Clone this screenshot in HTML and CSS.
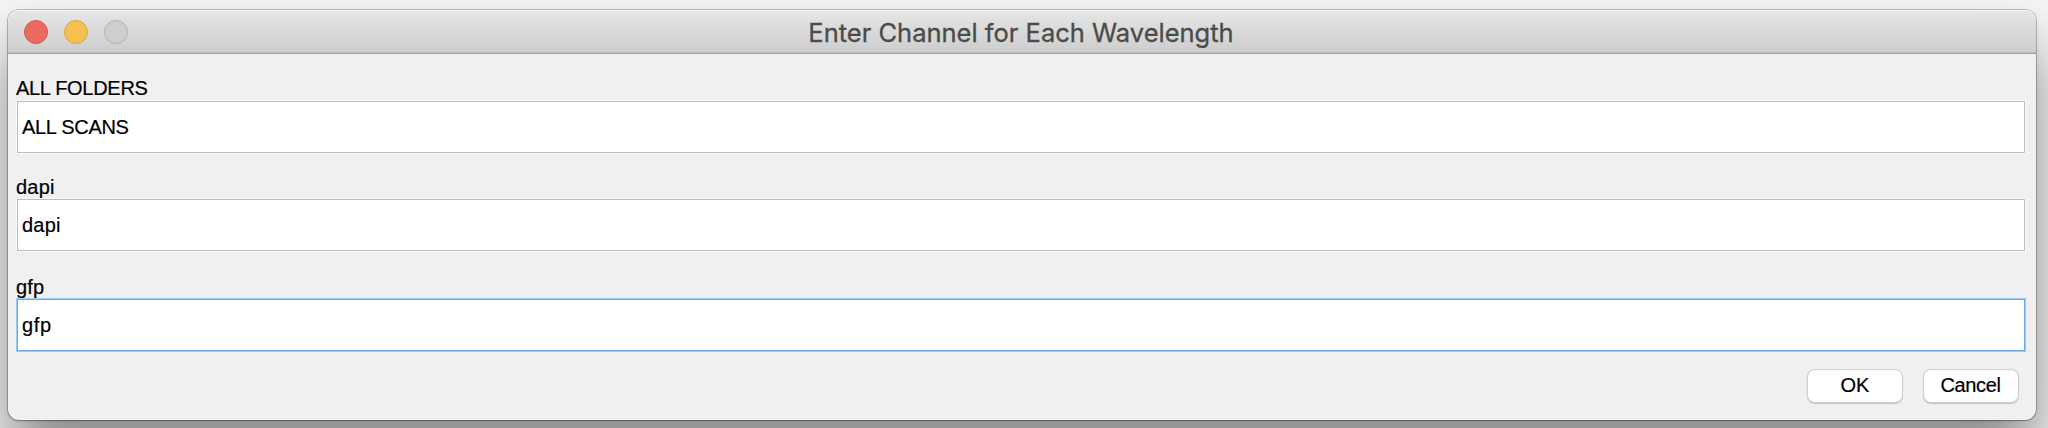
FILE: index.html
```html
<!DOCTYPE html>
<html lang="en">
<head>
<meta charset="utf-8">
<title>Enter Channel for Each Wavelength</title>
<link rel="stylesheet" href="styles.css">
</head>
<body>
<main class="window">
  <header class="titlebar">
    <div class="lights">
      <span class="light close"></span>
      <span class="light minimize"></span>
      <span class="light disabled"></span>
    </div>
    <h1 class="title"><span>Enter Channel for Each Wavelength</span></h1>
  </header>
  <form class="form">
    <div class="row">
      <label class="label caps" for="all">ALL FOLDERS</label>
      <input class="field caps-field" id="all" type="text" value="ALL SCANS">
    </div>
    <div class="row">
      <label class="label lower" for="dapi">dapi</label>
      <input class="field" id="dapi" type="text" value="dapi">
    </div>
    <div class="row last">
      <label class="label lower" for="gfp">gfp</label>
      <input class="field active" id="gfp" type="text" value="gfp">
    </div>
    <div class="actions">
      <button class="button" type="button">OK</button>
      <button class="button cancel" type="button">Cancel</button>
    </div>
  </form>
</main>
</body>
</html>
```
FILE: styles.css
```css
* { box-sizing: border-box; }
html { height: 100%; overflow: hidden; }
body {
  margin: 0;
  height: 428px;
  padding: 10px 12px 8px 8px;
  overflow: hidden;
  background: #f6f6f6;
  font-family: "Liberation Sans", Arial, sans-serif;
  font-size: 20px;
  color: #000;
}
.window {
  height: 410px;
  border-radius: 11px;
  background: #f0f0f0;
  box-shadow: 0 0 0 1px rgba(0, 0, 0, .22), 0 1px 2px rgba(0, 0, 0, .2), 0 36px 60px rgba(0, 0, 0, .45);
}
.titlebar {
  display: grid;
  grid-template-columns: 200px 1fr 200px;
  align-items: center;
  height: 44px;
  padding-right: 2px;
  border-radius: 11px 11px 0 0;
  border-bottom: 1px solid #a4a4a4;
  background: linear-gradient(#e6e6e6, #cdcdcd);
  box-shadow: inset 0 1px 0 #f5f5f5, inset 0 -1px 0 #bebebe;
}
.lights { display: flex; gap: 16px; padding-left: 16px; }
.light { width: 24px; height: 24px; border-radius: 50%; border: 1px solid; }
.close { background: #ec695f; border-color: #d9564c; }
.minimize { background: #f5c050; border-color: #dba63c; }
.disabled { background: #cfcfcf; border-color: #b1b1b1; }
.title {
  margin: 0;
  padding-top: 2px;
  text-align: center;
  font: 400 25.5px/42px Inter, sans-serif;
  color: #4b4b4b;
  -webkit-text-stroke: .3px #4b4b4b;
  white-space: nowrap;
}
.form {
  display: flex;
  flex-direction: column;
  padding: 24px 10px 0 8px;
  -webkit-text-stroke: .2px #000;
}
.row { display: flex; flex-direction: column; height: 98px; }
.row.last { height: 80px; margin-top: 2px; }
.label { height: 23px; line-height: 20px; letter-spacing: -.3px; }
.label.lower { padding-top: 1px; letter-spacing: .2px; }
.field {
  width: 2008px;
  height: 52px;
  margin-left: 1px;
  padding: 0 4px;
  border: 1px solid #bdbdbd;
  border-radius: 0;
  outline: 1px solid #fafafa;
  background: #fff;
  font: inherit;
  letter-spacing: .2px;
}
.field.active {
  padding-top: 1px;
  border-color: #72a9e4;
  outline-color: #99c9f9;
  letter-spacing: .6px;
}
.caps-field { letter-spacing: -.3px; }
.actions { display: flex; justify-content: flex-end; gap: 22px; padding: 14px 8px 0 0; }
.button {
  width: 94px;
  height: 32px;
  padding: 0 0 1px;
  border: 0;
  border-radius: 7px;
  background: #fff;
  box-shadow: 0 0 0 1px #cfcfcf, 0 1px 1px 1px #c0c0c0;
  font: inherit;
  color: #000;
}
.cancel { padding-right: 1px; letter-spacing: -.4px; }
```
